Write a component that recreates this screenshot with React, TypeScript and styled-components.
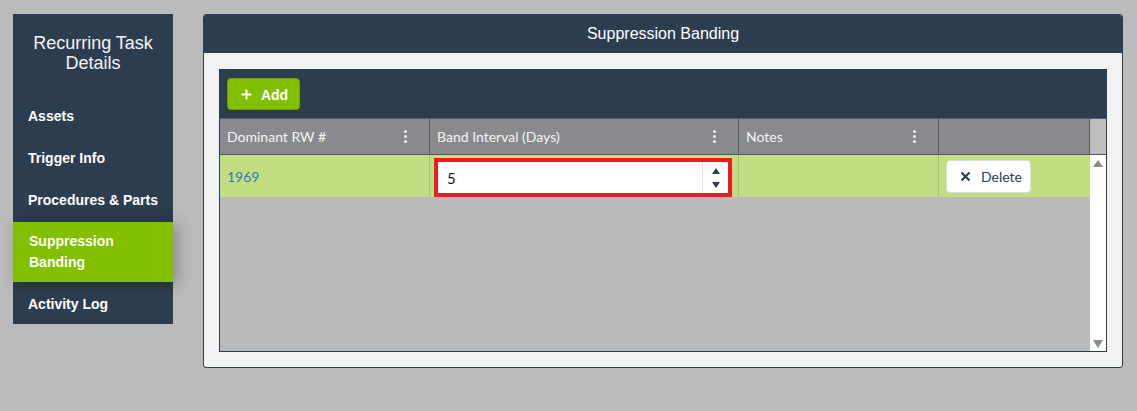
import React from "react";
import styled, { createGlobalStyle } from "styled-components";

const GlobalStyle = createGlobalStyle`
  html, body {
    margin: 0;
    padding: 0;
    background: #bbbbbb;
  }
  body {
    font-family: "Liberation Sans", Arial, sans-serif;
  }
  * { box-sizing: border-box; }
`;

const NAVY = "#2c3d50";
const LIME = "#82bf00";

const Page = styled.div`
  display: flex;
  align-items: flex-start;
  gap: 30px;
  padding: 14px 14px 0 13px;
  width: 1137px;
  height: 411px;
`;

const Sidebar = styled.nav`
  width: 160px;
  flex: none;
  background: ${NAVY};
  color: #ffffff;
  display: flex;
  flex-direction: column;
`;

const SidebarTitle = styled.h2`
  margin: 0;
  padding: 19px 8px 23px;
  font-family: "Liberation Sans", Arial, sans-serif;
  font-weight: 400;
  font-size: 18px;
  line-height: 20px;
  text-align: center;
  color: #f2f4f6;
`;

const NavItem = styled.div<{ $active?: boolean; $low?: boolean }>`
  position: relative;
  padding: ${(p) => (p.$active ? "9px 15px 9px 16px" : p.$low ? "12px 15px 10px" : "10px 15px 12px")};
  font-size: 14px;
  font-weight: 700;
  line-height: ${(p) => (p.$active ? "21px" : "20px")};
  color: #ffffff;
  background: ${(p) => (p.$active ? LIME : "transparent")};
  box-shadow: ${(p) => (p.$active ? "4px 2px 14px rgba(0,0,0,0.28)" : "none")};
  z-index: ${(p) => (p.$active ? 1 : 0)};
`;

const Panel = styled.section`
  flex: 1;
  height: 354px;
  border: 1px solid ${NAVY};
  border-radius: 3px;
  background: #f2f2f2;
  display: flex;
  flex-direction: column;
  overflow: hidden;
`;

const PanelHeader = styled.header`
  height: 38px;
  flex: none;
  background: ${NAVY};
  color: #ffffff;
  font-size: 16px;
  line-height: 38px;
  text-align: center;
`;

const PanelBody = styled.div`
  flex: 1;
  padding: 16px 15px 15px 15px;
  display: flex;
`;

const Grid = styled.div`
  flex: 1;
  border: 1px solid ${NAVY};
  display: flex;
  flex-direction: column;
  font-family: Lato, "Open Sans", sans-serif;
  font-size: 14px;
`;

const Toolbar = styled.div`
  height: 48px;
  flex: none;
  background: ${NAVY};
  padding: 8px 7px 7px;
  display: flex;
  align-items: flex-start;
`;

const AddButton = styled.button`
  height: 32px;
  width: 73px;
  border: 1px solid #6f9f08;
  border-radius: 4px;
  background: ${LIME};
  color: #ffffff;
  font-family: "Liberation Sans", Arial, sans-serif;
  font-weight: 700;
  font-size: 14px;
  display: flex;
  align-items: center;
  justify-content: center;
  gap: 9px;
  padding: 1px 0 0 2px;
  cursor: pointer;
`;

const COLS = "210px 309px 200px 151px 16px";

const HeaderRow = styled.div`
  display: grid;
  grid-template-columns: ${COLS};
  height: 37px;
  flex: none;
  background: #898a8e;
  border-top: 1px solid #5b5c60;
  border-bottom: 1px solid #56575b;
`;

const HeaderCell = styled.div<{ $last?: boolean }>`
  display: flex;
  align-items: center;
  justify-content: space-between;
  padding: 0 22px 0 7px;
  color: #f4f4f4;
  border-right: ${(p) => (p.$last ? "none" : "1px solid #56575b")};
`;

const HeaderFiller = styled.div`
  background: #bdbdbd;
`;

const Kebab = styled.span`
  display: flex;
  flex-direction: column;
  gap: 2px;
  & > i {
    width: 3px;
    height: 3px;
    border-radius: 50%;
    background: #f4f4f4;
  }
`;

const BodyArea = styled.div`
  flex: 1;
  display: grid;
  grid-template-columns: 870px 16px;
  background: #bababa;
  min-height: 0;
`;

const Rows = styled.div`
  display: flex;
  flex-direction: column;
`;

const DataRow = styled.div`
  display: grid;
  grid-template-columns: 210px 309px 200px 151px;
  height: 42px;
  background: #c1de81;
`;

const Cell = styled.div<{ $divider?: boolean }>`
  display: flex;
  align-items: center;
  padding: 0 7px;
  border-right: ${(p) => (p.$divider ? "1px solid #a9bf7c" : "none")};
`;

const LinkText = styled.span`
  color: #3179b5;
`;

const EditorCell = styled.div`
  display: flex;
  padding: 3px 6px 0 4px;
  border-right: 1px solid #a9bf7c;
`;

const NumberBox = styled.div`
  flex: 1;
  height: 39px;
  border: 4px solid #ed1c24;
  background: #ffffff;
  display: flex;
  align-items: stretch;
`;

const NumberValue = styled.span`
  flex: 1;
  display: flex;
  align-items: center;
  padding-left: 9px;
  color: #1a1a1a;
  font-size: 15px;
`;

const Spinner = styled.div`
  width: 26px;
  border-left: 1px solid #e6e6e6;
  display: flex;
  flex-direction: column;
  align-items: center;
  justify-content: center;
  gap: 8px;
`;

const DeleteButton = styled.button`
  height: 33px;
  width: 85px;
  border: 1px solid #d9dde2;
  border-radius: 4px;
  background: #ffffff;
  color: #2c3d50;
  font-family: Lato, "Open Sans", sans-serif;
  font-size: 14px;
  display: flex;
  align-items: center;
  gap: 10px;
  padding: 0 0 0 13px;
  cursor: pointer;
`;

const Scrollbar = styled.div`
  background: #ffffff;
  display: flex;
  flex-direction: column;
  justify-content: space-between;
  align-items: center;
  padding: 5px 0 3px;
`;

const Dots = () => (
  <Kebab>
    <i />
    <i />
    <i />
  </Kebab>
);

const Triangle = ({ dir, color, w, h }: { dir: "up" | "down"; color: string; w: number; h: number }) => (
  <svg width={w} height={h} viewBox={`0 0 ${w} ${h}`}>
    {dir === "up" ? (
      <polygon points={`0,${h} ${w / 2},0 ${w},${h}`} fill={color} />
    ) : (
      <polygon points={`0,0 ${w},0 ${w / 2},${h}`} fill={color} />
    )}
  </svg>
);

const menu = ["Assets", "Trigger Info", "Procedures & Parts", "Suppression Banding", "Activity Log"];

export default function App() {
  return (
    <>
      <GlobalStyle />
      <Page>
        <Sidebar>
          <SidebarTitle>
            Recurring Task
            <br />
            Details
          </SidebarTitle>
          {menu.map((m) => (
            <NavItem key={m} $active={m === "Suppression Banding"} $low={m === "Activity Log"}>
              {m === "Suppression Banding" ? (
                <>
                  Suppression
                  <br />
                  Banding
                </>
              ) : (
                m
              )}
            </NavItem>
          ))}
        </Sidebar>

        <Panel>
          <PanelHeader>Suppression Banding</PanelHeader>
          <PanelBody>
            <Grid>
              <Toolbar>
                <AddButton>
                  <svg width="11" height="11" viewBox="0 0 11 11">
                    <path d="M5.5 0.5v10M0.5 5.5h10" stroke="#fff" strokeWidth="2" />
                  </svg>
                  Add
                </AddButton>
              </Toolbar>
              <HeaderRow>
                <HeaderCell>
                  Dominant RW #
                  <Dots />
                </HeaderCell>
                <HeaderCell>
                  Band Interval (Days)
                  <Dots />
                </HeaderCell>
                <HeaderCell>
                  Notes
                  <Dots />
                </HeaderCell>
                <HeaderCell />
                <HeaderFiller />
              </HeaderRow>
              <BodyArea>
                <Rows>
                  <DataRow>
                    <Cell $divider>
                      <LinkText>1969</LinkText>
                    </Cell>
                    <EditorCell>
                      <NumberBox>
                        <NumberValue>5</NumberValue>
                        <Spinner>
                          <Triangle dir="up" color="#2c3d50" w={8} h={6} />
                          <Triangle dir="down" color="#2c3d50" w={8} h={6} />
                        </Spinner>
                      </NumberBox>
                    </EditorCell>
                    <Cell $divider />
                    <Cell>
                      <DeleteButton>
                        <svg width="11" height="11" viewBox="0 0 11 11">
                          <path d="M1.5 1.5l8 8M9.5 1.5l-8 8" stroke="#2c3d50" strokeWidth="2.2" />
                        </svg>
                        Delete
                      </DeleteButton>
                    </Cell>
                  </DataRow>
                </Rows>
                <Scrollbar>
                  <Triangle dir="up" color="#8a8a8a" w={10} h={7} />
                  <Triangle dir="down" color="#8a8a8a" w={10} h={8} />
                </Scrollbar>
              </BodyArea>
            </Grid>
          </PanelBody>
        </Panel>
      </Page>
    </>
  );
}
